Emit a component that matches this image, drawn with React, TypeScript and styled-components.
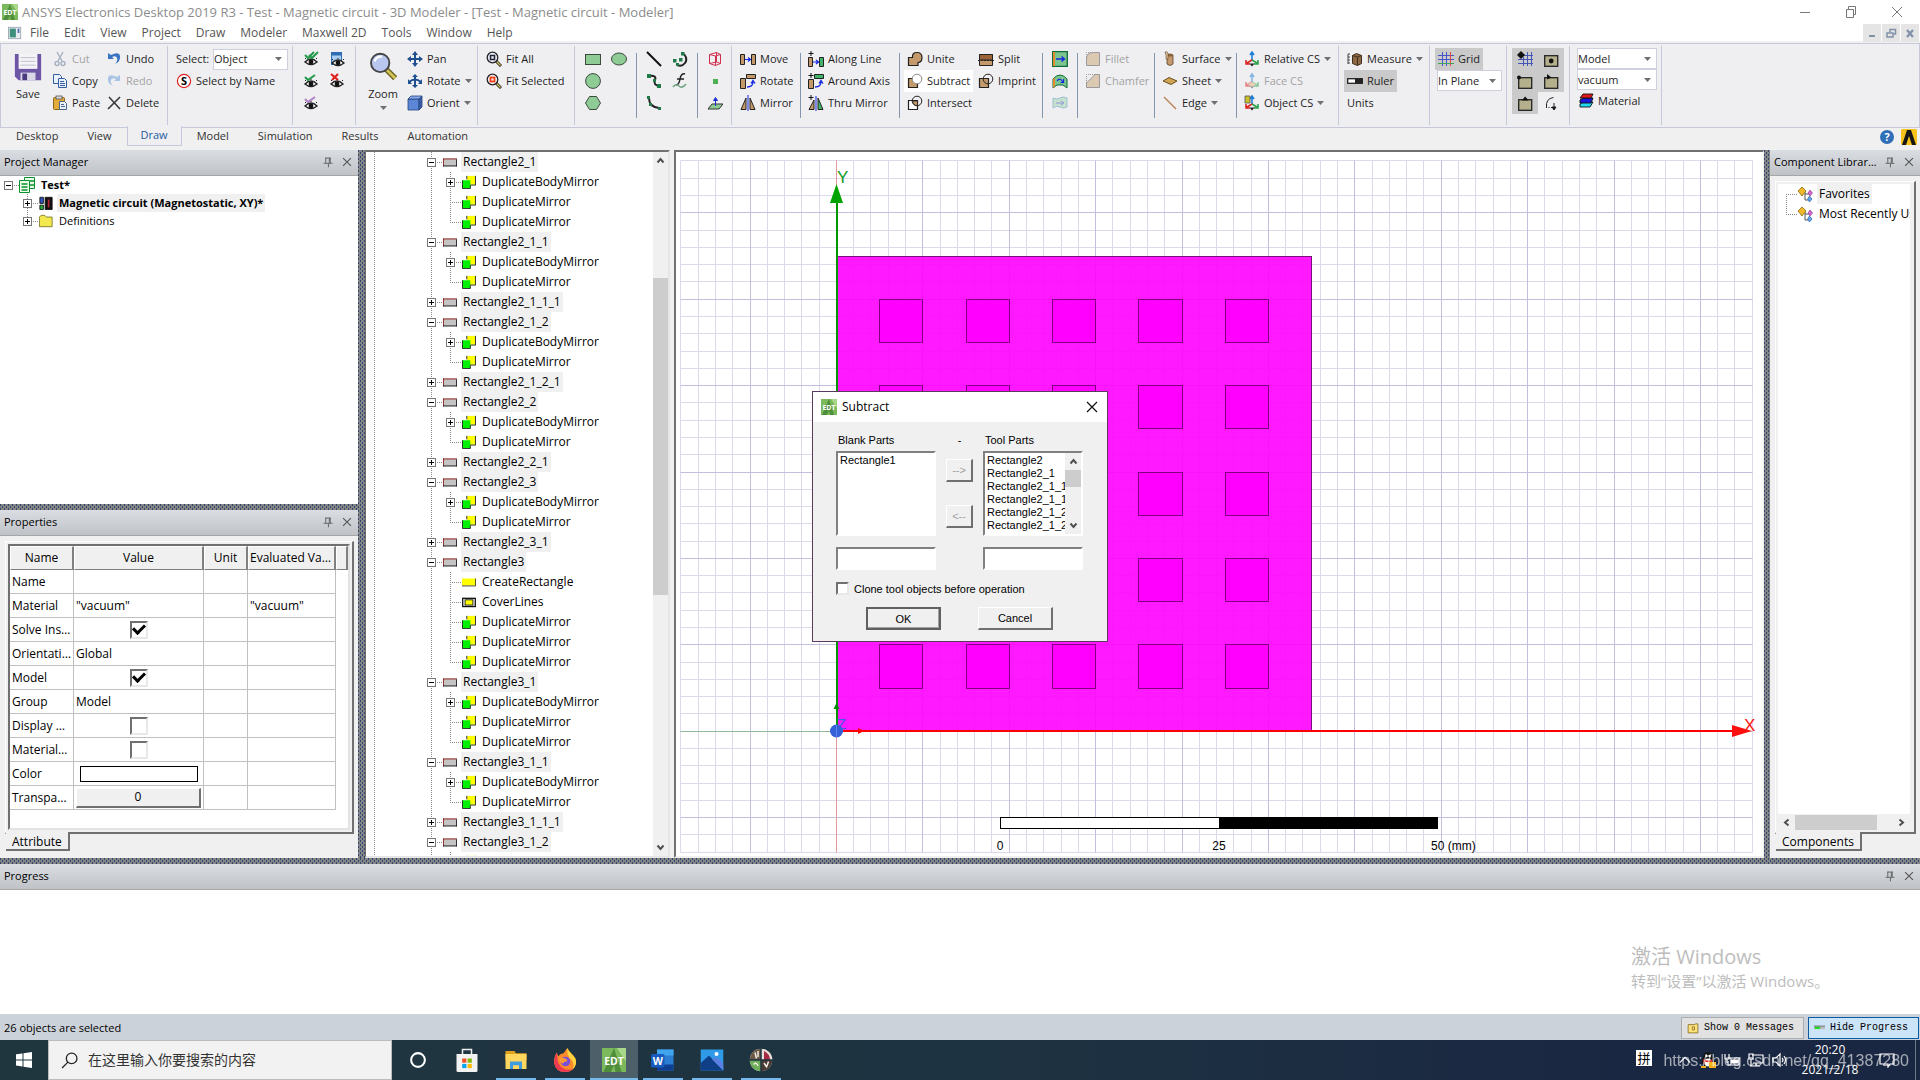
import React, { ReactNode } from 'react';
import styled, { createGlobalStyle, css } from 'styled-components';

const UI = '"Open Sans", "Noto Sans CJK SC", sans-serif';
const CLASSIC = '"Liberation Sans", "Noto Sans CJK SC", sans-serif';
const MONO = '"Liberation Mono", "Noto Sans CJK SC", monospace';

const Global = createGlobalStyle`
  * { box-sizing: border-box; }
  body { margin: 0; background: #f0f0f0; color: #000; font: 11px/18px ${UI}; overflow: hidden; }
  button, input, select { font: inherit; color: inherit; margin: 0; }
  button { background: none; border: 0; padding: 0; }
  svg { display: block; flex: none; }
  ul { list-style: none; margin: 0; padding: 0; }
`;

/* ------------------------------------------------------------------ icons */

const G = '#8fcb95';
const TAN = '#c49a6c';

const eye = (
  <g>
    <path d="M2 11q6-6 12 0q-6 5-12 0z" fill="#fff" stroke="#222" strokeWidth="1.4" />
    <circle cx="8" cy="11" r="2.4" fill="#111" />
    <path d="M3 8l-1-1M13 8l1-1M8 7V6" stroke="#222" />
  </g>
);
const csAxes = (
  <g fill="none" strokeWidth="1.6">
    <path d="M8 9V2M6 4l2-3 2 3" stroke="#1d7fd6" />
    <path d="M8 9l5 3M14 9v4h-4" stroke="#2ca24a" />
    <path d="M8 9l-5 3M2 9v4h4" stroke="#d9231d" />
    <path d="M5.500 12.500h5l-2.500 3z" fill="#222" stroke="none" />
  </g>
);
const snapBox = <rect x="1.700" y="4.700" width="13" height="10.600" fill="#b5b08c" stroke="#222" strokeWidth="1.300" />;

const icons: Record<string, ReactNode> = {
  edt: (
    <g>
      <rect width="16" height="16" fill="#7cb85c" />
      <path d="M8 0l5 16H9L8 11l-2 5H1z" fill="#4f8f3c" />
      <path d="M10 0h6v9z" fill="#a9d88a" />
      <text x="8" y="11" fontSize="7" fontWeight="700" textAnchor="middle" fill="#fff">EDT</text>
    </g>
  ),
  doc: (
    <g>
      <rect x=".5" y="1.500" width="14" height="13" fill="#e9edf2" stroke="#9aa4ae" />
      <rect x="2" y="3" width="7" height="10" fill="#3f8f7d" />
      <rect x="11" y="3" width="2" height="5" fill="#4a6ea9" />
    </g>
  ),
  save: (
    <g>
      <path d="M1 1h14v14H3l-2-2z" fill="#6d56a5" />
      <path d="M3 1h10v8H3z" fill="#f4f4f8" />
      <path d="M4 3h8M4 5h8M4 7h8" stroke="#c9c9d3" strokeWidth=".6" />
      <path d="M4 11h8v4H4z" fill="#d9d6e6" />
      <path d="M5 11.500h2.500V15H5z" fill="#4a3880" />
    </g>
  ),
  cut: (
    <g fill="none" stroke="#a9b4c2" strokeWidth="1.500">
      <path d="M5 1l5 9M11 1L6 10" />
      <circle cx="5" cy="12.500" r="2" />
      <circle cx="11" cy="12.500" r="2" />
    </g>
  ),
  copy: (
    <g fill="#e8f0fb" stroke="#355f9e">
      <path d="M1.500 1.500h6l2 2v7h-8z" />
      <path d="M6.500 5.500h6l2 2v7h-8z" />
      <path d="M8 8.500h4M8 10.500h5M8 12.500h5" />
    </g>
  ),
  paste: (
    <g>
      <rect x="1.500" y="2.500" width="11" height="12" rx="1" fill="#e3ab3a" stroke="#8a6417" />
      <rect x="4" y="1" width="6" height="3" fill="#d8d8d8" stroke="#555" strokeWidth=".8" />
      <path d="M7.500 6.500h5l2 2v6h-7z" fill="#eef3fb" stroke="#48648f" />
      <path d="M9 9.500h3M9 11.500h4" stroke="#48648f" />
    </g>
  ),
  undo: <path d="M2 2v6h6L6 6q4-2 5 1t-2 6q6-3 5-8T5 4z" fill="#3a74c4" />,
  redo: <path d="M14 2v6H8l2-2Q6 4 5 7t2 6Q1 10 2 5t9-1z" fill="#a9c3e4" />,
  del: <path d="M3 2l11 12M14 2L2 14" stroke="#3b3b3b" strokeWidth="1.600" />,
  byname: (
    <g>
      <circle cx="8" cy="8" r="6.600" fill="#fff" stroke="#e02020" strokeWidth="1.200" />
      <text x="8" y="12" fontSize="11" fontWeight="700" textAnchor="middle">S</text>
    </g>
  ),
  eyeAll: <g>{eye}<path d="M2 4l3 3 6-6M6 4l3 3 6-6" fill="none" stroke="#1f9b4a" strokeWidth="2" /></g>,
  eyeOne: <g>{eye}<path d="M2 4l3 3 7-5" fill="none" stroke="#1f9b4a" strokeWidth="2" /></g>,
  eyePart: <g>{eye}<path d="M2 4l3 3 7-5" fill="none" stroke="#b07fc4" strokeWidth="2" /></g>,
  eyeList: (
    <g>
      <rect x="2.500" y="1.500" width="10" height="12" fill="#a9cdf0" stroke="#2f6db3" />
      <path d="M2.500 3h10" stroke="#2f6db3" strokeWidth="3" />
      <g transform="translate(1 1)">{eye}</g>
    </g>
  ),
  eyeNone: <g>{eye}<path d="M2 1l7 6M9 1L3 7" stroke="#e02020" strokeWidth="2.200" /></g>,
  zoom: (
    <g>
      <path d="M9.500 9l5 5" stroke="#6b6320" strokeWidth="3" />
      <path d="M9.500 9l5 5" stroke="#d4c45a" strokeWidth="1.500" />
      <circle cx="6.500" cy="5.800" r="4.900" fill="#b9c6ee" stroke="#444" />
      <path d="M3.500 5q1-3 4-2.500" stroke="#fff" fill="none" strokeWidth="1.200" />
    </g>
  ),
  pan: (
    <g fill="#1e4f8f">
      <path d="M7 3h2v10H7z" />
      <path d="M3 7h10v2H3z" />
      <path d="M8 0l3 4H5zM8 16l3-4H5zM0 8l4-3v6zM16 8l-4-3v6z" />
    </g>
  ),
  rotate: (
    <g fill="none" stroke="#1e4f8f" strokeWidth="2">
      <path d="M8 2v12M2 9q6-5 12 0" />
      <path d="M5 4l3-3 3 3zM5 12l3 3 3-3zM1 6v5h4zM15 6v5h-4z" fill="#1e4f8f" stroke="none" />
    </g>
  ),
  orient: (
    <g stroke="#27457e" strokeWidth=".8">
      <path d="M1 4h11v11H1z" fill="#5c86d6" />
      <path d="M1 4l3-3h11l-3 3z" fill="#88aaea" />
      <path d="M12 4l3-3v11l-3 3z" fill="#3a5fa8" />
    </g>
  ),
  fitAll: (
    <g fill="none">
      <path d="M10 10l5 5" stroke="#222" strokeWidth="3" />
      <path d="M10.500 10.500l4 4" stroke="#d4c45a" strokeWidth="1.200" />
      <circle cx="6.500" cy="6.500" r="5.300" fill="#e9ecf8" stroke="#222" strokeWidth="1.300" />
      <rect x="4.500" y="4.500" width="4" height="4" stroke="#223" strokeWidth="1.500" />
    </g>
  ),
  fitSel: (
    <g fill="none">
      <path d="M10 10l5 5" stroke="#222" strokeWidth="3" />
      <path d="M10.500 10.500l4 4" stroke="#d4c45a" strokeWidth="1.200" />
      <circle cx="6.500" cy="6.500" r="5.300" fill="#f6e9ec" stroke="#222" strokeWidth="1.300" />
      <rect x="4.500" y="4.500" width="4" height="4" stroke="#f03a10" strokeWidth="1.700" />
    </g>
  ),
  rect: <rect x=".5" y="3.500" width="15" height="10" fill={G} stroke="#3c4a3e" />,
  ellipse: <ellipse cx="8" cy="8" rx="7.500" ry="6" fill={G} stroke="#3c4a3e" />,
  circle: <circle cx="8" cy="8" r="7.400" fill={G} stroke="#3c4a3e" />,
  hexagon: <path d="M4.500 1.500h7l4 6.500-4 6.500h-7L.5 8z" fill={G} stroke="#3c4a3e" />,
  line: <path d="M1 1l14 14" stroke="#111" strokeWidth="2" />,
  arc: (
    <g fill="none">
      <path d="M12 3q4 5 1 9t-8 2" stroke="#222" strokeWidth="2" />
      <path d="M9 1h3.500v3.500H9zM1 8h3.500v3.500H1zM7 7h3.500v3.500H7zM4 12h3v3H4z" fill="#1f7a4a" />
    </g>
  ),
  spline: (
    <g fill="none">
      <path d="M3 3q8-1 6 4t4 6" stroke="#222" strokeWidth="2" />
      <path d="M1 1h4v4H1zM7 6h3v3H7zM11 11h4v4h-4z" fill="#1f7a4a" />
    </g>
  ),
  func: (
    <g fill="none" strokeWidth="1.500">
      <path d="M13 1q-4-1-5 5t-4 6M5 6h7" stroke="#222" />
      <path d="M1 14q3-4 6-1t7-2" stroke="#6fa581" />
    </g>
  ),
  arc3: (
    <g fill="none">
      <path d="M3 3q0 9 10 10" stroke="#222" strokeWidth="2" />
      <path d="M1 1h3v3H1zM3 8h3v3H3zM12 12h3v3h-3z" fill="#1f7a4a" />
    </g>
  ),
  cube: (
    <g fill="none" stroke="#cf2f4a">
      <path d="M2.500 3.500l7-2 4 2v9l-5 2-6-2zM2.500 3.500l6 1.500v9.500M8.500 5l5-1.500M9.500 1.500V11l4 1.500M9.500 11l-7 1.500" />
    </g>
  ),
  point: <rect x="6" y="6" width="5" height="5" fill="#4caf50" />,
  plane: (
    <g>
      <path d="M1 14l4-5h11l-4 5z" fill={G} stroke="#333" />
      <path d="M8.500 11V4M6.500 5.500l2-3 2 3z" stroke="#2030d0" fill="#2030d0" />
    </g>
  ),
  move: (
    <g>
      <path d="M.5 3.500h4v10h-4zM11.500 3.500h4v10h-4z" fill={TAN} stroke="#222" />
      <path d="M5 8.500h5M8 6.500l2.500 2L8 10.500" stroke="#1424e0" fill="none" strokeWidth="1.200" />
    </g>
  ),
  rot: (
    <g>
      <path d="M.5 5.500h5v10h-5zM6.500 1.500h9v4h-9z" fill={TAN} stroke="#222" />
      <path d="M7 14q6 0 6-5M11 10.500l2-3 2 3" stroke="#1424e0" fill="none" strokeWidth="1.300" />
    </g>
  ),
  mirror: (
    <g stroke="#222">
      <path d="M6 3v11.500H1z" fill={TAN} />
      <path d="M10 3v11.500h5z" fill={TAN} />
      <path d="M8 0v16" stroke="#1424e0" />
    </g>
  ),
  along: (
    <g>
      <path d="M.5 6.500h4v9h-4z" fill={TAN} stroke="#222" />
      <path d="M11.500 6.500h4v9h-4z" fill="#3fb56b" stroke="#222" />
      <path d="M5 11h5M8 9l2.500 2L8 13" stroke="#1424e0" fill="none" strokeWidth="1.200" />
      <path d="M3 0v5M.5 2.500h5" stroke="#111" />
    </g>
  ),
  around: (
    <g>
      <path d="M.5 6.500h5v9h-5z" fill={TAN} stroke="#222" />
      <path d="M6.500 1.500h9v4h-9z" fill="#3fb56b" stroke="#222" />
      <path d="M7 14q6 0 6-5M11 10.500l2-3 2 3" stroke="#1424e0" fill="none" strokeWidth="1.300" />
      <path d="M3 0v5M.5 2.500h5" stroke="#111" />
    </g>
  ),
  thru: (
    <g stroke="#222">
      <path d="M6 5v9.500H1z" fill={TAN} />
      <path d="M10 3v11.500h5z" fill="#3fb56b" />
      <path d="M8 1v15" stroke="#1424e0" />
      <path d="M3 0v5M.5 2.500h5" stroke="#111" />
    </g>
  ),
  unite: <path d="M1.500 6.500h4Q5 1.500 10 1.500t5 5-4 5v3H1.500z" fill={TAN} stroke="#222" strokeWidth="1.200" />,
  subtract: (
    <g>
      <path d="M1.500 5.500h9v9h-9z" fill={TAN} stroke="#222" strokeWidth="1.200" />
      <circle cx="10" cy="6" r="4.800" fill="#fff" stroke="#888" />
    </g>
  ),
  intersect: (
    <g>
      <path d="M1.500 5.500h9v9h-9z" fill="#fff" stroke="#222" strokeWidth="1.200" />
      <circle cx="10" cy="6" r="4.800" fill="none" stroke="#222" />
      <path d="M5.500 6h5v4.500Q6 10.500 5.500 6z" fill={TAN} stroke="#222" strokeWidth=".8" />
    </g>
  ),
  split: (
    <g>
      <path d="M1.500 3.500h13v11h-13z" fill={TAN} stroke="#222" />
      <path d="M1.500 3.500h13V9h-13z" fill="#9a6338" stroke="#222" />
      <path d="M0 9.500h16" stroke="#222" strokeDasharray="2 1" />
    </g>
  ),
  imprint: (
    <g>
      <path d="M1.500 5.500h9v9h-9z" fill={TAN} stroke="#222" strokeWidth="1.200" />
      <circle cx="10" cy="6" r="4.800" fill="none" stroke="#222" />
    </g>
  ),
  sweepV: (
    <g>
      <path d="M.7.7h14.600v14.600H.7z" fill="#7cc58f" stroke="#0d6b38" strokeWidth="1.300" />
      <path d="M1 1h2v14H1z" fill="#e08b2e" />
      <path d="M4 8h8M9.500 5.500L12.500 8l-3 2.500" stroke="#1424e0" fill="none" strokeWidth="1.300" />
    </g>
  ),
  sweepA: (
    <g>
      <path d="M1 15V6q7-8 14 0v9l-4-3H5z" fill="#7cc58f" stroke="#0d6b38" />
      <path d="M1 6l2-1v8l-2 2z" fill="#e08b2e" />
      <path d="M5 8q3-4 6 1M11.500 6v3.500H8.500" stroke="#1424e0" fill="none" strokeWidth="1.200" />
    </g>
  ),
  sweepP: (
    <g opacity=".55">
      <path d="M1 3q4 2 7 0t7 0v9q-4 2-7 0t-7 1z" fill="#a7d6b4" stroke="#5a9bb4" />
      <path d="M4 8h7M9 6l3 2-3 2" stroke="#4a56d0" fill="none" />
    </g>
  ),
  fillet: (
    <g stroke="#9a9a9a" fill="none">
      <path d="M1.500 14.500V8q0-6.500 7-6.500h6v13z" fill="#dcc9b1" />
      <path d="M1.500 8V1.500h7" strokeDasharray="1 1" />
    </g>
  ),
  chamfer: (
    <g stroke="#9a9a9a" fill="none">
      <path d="M1.500 14.500V10L10 1.500h4.500v13z" fill="#dcc9b1" />
      <path d="M1.500 10V1.500H10" strokeDasharray="1 1" />
    </g>
  ),
  surface: (
    <g>
      <path d="M5 4v9q3 3 6 0V4z" fill={TAN} stroke="#5c4326" strokeWidth=".8" />
      <ellipse cx="8" cy="4" rx="3" ry="1.500" fill="#8a6238" />
      <path d="M3 1q2-1 3 1v6H4V4z" fill="#e3c39a" stroke="#5c4326" strokeWidth=".6" />
    </g>
  ),
  sheet: <path d="M1 8l6-3.500L15 8l-6 3.500z" fill="#cda553" stroke="#6a4f1c" />,
  edge: <path d="M2 2l12 12" stroke="#b98458" strokeWidth="1.400" />,
  relcs: csAxes,
  facecs: <g opacity=".5">{csAxes}<path d="M4 11l4-2 4 2-4 3z" fill="#e3b07f" /></g>,
  objcs: <g>{csAxes}<path d="M1 1h5v7H1z" fill="#c9c02c" stroke="#555" strokeWidth=".8" /></g>,
  measure: (
    <g>
      <path d="M1 3v10M1 3h2M1 6h2M1 9h2M1 12h2" stroke="#444" />
      <path d="M5.500 4.500l4-2 5 2v8l-4 2-5-2z" fill="#8d6743" stroke="#42301e" />
      <path d="M5.500 4.500l5 1.500v8.500M10.500 6l4-1.500" stroke="#42301e" fill="none" />
    </g>
  ),
  ruler: (
    <g>
      <rect x=".7" y="5.700" width="14.600" height="4.600" fill="#fff" stroke="#222" strokeWidth="1.300" />
      <rect x="8" y="5.500" width="7.500" height="5" fill="#222" />
    </g>
  ),
  grid: (
    <g fill="none">
      <path d="M4.500 1v14M8.500 1v14M0 4.500h16M0 8.500h16" stroke="#4456c8" />
      <path d="M12.500 1v14" stroke="#e04848" />
      <path d="M0 12.500h16" stroke="#3fa455" />
    </g>
  ),
  snapGrid: (
    <g>
      <path d="M6.500 6v9M10.500 1v14M14.500 1v14M6 4.500h10M1 8.500h15M1 12.500h15" stroke="#4456b8" />
      <path d="M4 0l4 4-4 4-4-4z" fill="#111" />
    </g>
  ),
  snapCenter: <g>{snapBox}<circle cx="8.200" cy="10" r="2.400" fill="#111" /></g>,
  snapVertex: <g>{snapBox}<circle cx="2" cy="4.500" r="2" fill="#111" /></g>,
  snapEdge: <g>{snapBox}<path d="M4 1l4.500 3.500-4.500 2z" fill="#111" /></g>,
  snapMid: <g>{snapBox}<path d="M4.700 5.500l3.500-4 3.500 4z" fill="#111" /></g>,
  snapArc: (
    <g fill="none" stroke="#222">
      <path d="M3.500 12.500q-1-9 7-10" />
      <path d="M3 12.500h6" strokeDasharray="1 1.500" />
      <path d="M11 8v4M9 12h4l-2 3z" fill="#111" />
    </g>
  ),
  material: (
    <g stroke="#111" strokeWidth=".9">
      <path d="M2 11l3-2h10l-3 5H2z" fill="#20d8f0" />
      <path d="M2 7l3-2h10l-2 5H2z" fill="#1818d8" />
      <path d="M2 5l3-4h10l-2 4z" fill="#e01818" />
    </g>
  ),
  help: (
    <g>
      <circle cx="8" cy="8" r="7" fill="#2f6fb8" />
      <text x="8" y="12" fontSize="11" fontWeight="700" textAnchor="middle" fill="#fff">?</text>
    </g>
  ),
  ansys: (
    <g>
      <rect width="16" height="16" rx="1.500" fill="#f7c21a" />
      <path d="M6 1h4l5 15h-4L8 7l-3 9H1z" fill="#171717" />
    </g>
  ),
  pin: <path d="M5.500 3v6M10.500 3v6M5 3.500h6M9.500 4v5M3 9.500h10M8.500 10v4" stroke="#555" fill="none" />,
  x: <path d="M3.500 3.500l9 9M12.500 3.500l-9 9" stroke="#555" strokeWidth="1.300" />,
  project: (
    <g fill="#e9ffe9" stroke="#0a8f2f">
      <path d="M5.500.5h10v11h-10z" />
      <path d="M.5 3.500h10v12H.5z" />
      <path d="M2.500 7h6M2.500 10h6M2.500 13h6M12 3v2M14 3v2M12 7v2M14 7v2" strokeWidth="1.500" />
    </g>
  ),
  design: (
    <g stroke="#111">
      <path d="M1 1.500h4v7H1z" fill="#2f55c8" />
      <path d="M1 10.500h4v5H1z" fill="#1fae3a" />
      <path d="M7 1.500h8v14H7z" fill="#111" />
      <path d="M9.500 3.500h3v10h-3z" fill="#b3273a" />
    </g>
  ),
  folder: <path d="M.5 14.500v-11l2-2h4l2 2h6.500v11z" fill="#f3e84e" stroke="#7a7426" />,
  sheetObj: (
    <g>
      <rect x="0" y="4" width="16" height="9" fill="#c4c4c4" />
      <path d="M0 4.500h16M.5 4v9" stroke="#8c1414" />
      <path d="M0 12.500h16M15.500 5v8" stroke="#111" />
    </g>
  ),
  dup: (
    <g>
      <path d="M6 1h9v10H6z" fill="#ffff00" />
      <path d="M5.500 1v4M15.500 1v10.500H9" stroke="#111" fill="none" />
      <path d="M.5 6h9v9H.5z" fill="#00f000" />
      <path d="M.5 6v9.500h9V12" stroke="#111" fill="none" />
    </g>
  ),
  create: (
    <g>
      <rect x="0" y="4" width="16" height="8" fill="#ffff00" />
      <path d="M0 12.500h15.500V4" stroke="#333" fill="none" />
    </g>
  ),
  cover: (
    <g>
      <rect x=".8" y="3.800" width="14.400" height="9.400" fill="#fff" stroke="#111" strokeWidth="1.500" />
      <rect x="3.500" y="5.500" width="9" height="6" fill="#ffff00" stroke="#111" />
    </g>
  ),
  lib: (
    <g>
      <path d="M8 5v9h3M8 8h5" stroke="#555" fill="none" />
      <path d="M5 1l4 4-4 5-4-5z" fill="#f0b92a" stroke="#8c6a12" strokeWidth=".8" />
      <path d="M13 4l2.500 3L13 10l-2-3z" fill="#d86ad8" stroke="#7a2f7a" strokeWidth=".6" />
      <path d="M12.500 10l2.500 3-2.500 3-2-3z" fill="#5fa8f0" stroke="#1d4f96" strokeWidth=".6" />
    </g>
  ),
  msg: (
    <g>
      <path d="M1.500 3.500h8l2-1h3v12h-13z" fill="#ffe27a" stroke="#77611a" />
      <path d="M7 6.500h3v4H7z" fill="none" stroke="#77611a" />
    </g>
  ),
  bar: (
    <g>
      <path d="M0 5h16v4H0z" fill="#bcbcbc" />
      <path d="M1 5.500h8v3H1z" fill="#14e014" />
      <path d="M0 4.500h16" stroke="#444" />
    </g>
  ),
  winMin: <path d="M3 8.500h10" stroke="#777" />,
  winMax: <path d="M3.500 5.500h7v8h-7zM5.500 5V2.500h7v8H11" fill="none" stroke="#777" />,
  winX: <path d="M3 3l10 10M13 3L3 13" stroke="#777" />,
  mdiMin: <path d="M5 11h6" stroke="#8091a8" strokeWidth="2" />,
  mdiMax: <path d="M4 8h6v4H4zM7 7V4.500h5.500V9H11" fill="none" stroke="#8091a8" strokeWidth="1.500" />,
  mdiX: <path d="M5 5l6 7M11 5l-6 7" stroke="#8091a8" strokeWidth="2.200" />,
  start: <path d="M0 2.300L6.500 1.400v6H0zM7.500 1.200L16 0v7.400H7.500zM0 8.500h6.500v6L0 13.600zM7.500 8.500H16V16l-8.500-1.200z" fill="#fff" />,
  search: (
    <g fill="none" stroke="#222" strokeWidth="1.200">
      <circle cx="10" cy="6" r="5" />
      <path d="M6.500 9.500L1 15" />
    </g>
  ),
  cortana: <circle cx="8" cy="8" r="5" fill="none" stroke="#fff" strokeWidth="1.500" />,
  store: (
    <g>
      <path d="M5 5V1h6v4" fill="none" stroke="#eee" />
      <path d="M1 4h14v11q0 1-1 1H2q-1 0-1-1z" fill="#f2f2f2" />
      <path d="M4.800 7h2.800v2.800H4.800z" fill="#f25022" />
      <path d="M8.400 7h2.800v2.800H8.400z" fill="#7fba00" />
      <path d="M4.800 10.600h2.800v2.800H4.800z" fill="#00a4ef" />
      <path d="M8.400 10.600h2.800v2.800H8.400z" fill="#ffb900" />
    </g>
  ),
  explorer: (
    <g>
      <path d="M1 2h6l1 1.500h7V8H1z" fill="#e0a21c" />
      <path d="M1 4h14v10H1z" fill="#ffd75e" />
      <path d="M4 9h8v5h-2v-2.500H6V14H4z" fill="#3f9be0" />
    </g>
  ),
  firefox: (
    <g>
      <path d="M9.500 0q1 2 3 4 3.500 3 2.800 6.500Q14 16 8 16T.7 10Q.5 6 2.500 3l1 2.500Q5 3.500 7 3.500 8.500 1.500 9.500 0z" fill="#ff8a2a" />
      <path d="M9.500 0q1 2 3 4 3.500 3 2.800 6.500-.5 2-2 3.500 1-4-1-6Q9 5 9.500 0z" fill="#ffd23f" />
      <path d="M2.500 3q-2 4-1.700 7Q2 16 8 16q3.500 0 5.300-2Q9 15.500 6 13T3 7z" fill="#ec3a55" />
      <circle cx="8.300" cy="9" r="3.200" fill="#7a4fd8" />
      <path d="M4 7q2-1 4 0 2 .5 1 2-2 0-2.500 1.500Q4.500 9.500 4 7z" fill="#ff9a33" />
    </g>
  ),
  word: (
    <g>
      <path d="M4 1h11v14H4z" fill="#2b7cd3" />
      <path d="M4 1h11v4H4z" fill="#41a5ee" />
      <path d="M4 11h11v4H4z" fill="#103f91" />
      <rect x="0" y="4" width="9" height="9" rx="1" fill="#185abd" />
      <text x="4.500" y="11" fontSize="7" fontWeight="700" textAnchor="middle" fill="#fff">W</text>
    </g>
  ),
  photos: (
    <g>
      <rect x=".5" y="1" width="15" height="14" fill="#2f9be8" />
      <path d="M.5 10L6 5l9.500 10H.5z" fill="#0f3f86" />
      <path d="M8 7.500L11 6l4.500 4v5z" fill="#5b7fe0" />
      <circle cx="11" cy="4" r="1.300" fill="#fff" />
    </g>
  ),
  avatar: (
    <g>
      <circle cx="8" cy="8" r="7.500" fill="#e9e2d6" />
      <path d="M8 .5A7.500 7.500 0 0 0 .5 8H8z" fill="#6b5a48" />
      <path d="M8 .5A7.500 7.500 0 0 1 15.500 8H8z" fill="#e7dfd8" />
      <path d="M10 2q4 2 4 6h-4z" fill="#a52a45" />
      <path d="M8 15.500A7.500 7.500 0 0 1 .5 8H8z" fill="#6fae5a" />
      <path d="M8 15.500A7.500 7.500 0 0 0 15.500 8H8z" fill="#4a3a34" />
      <path d="M4 3l1 4M6 2v4M3 11q2-2 3 1M10 10l2 3M13 9l-1 3" stroke="#f2ece2" fill="none" />
      <path d="M0 8h16M8 0v16" stroke="#1e3442" />
    </g>
  ),
  ime: (
    <g>
      <rect width="16" height="16" fill="#fff" />
      <text x="8" y="13" fontSize="13" textAnchor="middle" fill="#000">拼</text>
    </g>
  ),
  up: <path d="M2 11l6-6 6 6" stroke="#fff" fill="none" strokeWidth="1.300" />,
  qq: (
    <g>
      <path d="M8 0q5 0 5 6l2 5-2 1-2 3H5l-2-3-2-1 2-5q0-6 5-6z" fill="#151515" />
      <ellipse cx="8" cy="10.500" rx="3.500" ry="4" fill="#fff" />
      <path d="M3 7q5 3 10 0l-1 2.500Q8 11 5 9.500L4 13z" fill="#e02a20" />
      <path d="M1 14h5v2H1zM9 10h7v6H9z" fill="#f5b21a" />
      <circle cx="6.500" cy="4" r="1.200" fill="#fff" />
      <circle cx="9.500" cy="4" r="1.200" fill="#fff" />
    </g>
  ),
  battery: (
    <g fill="none" stroke="#fff" strokeWidth="1.200">
      <path d="M5 6h10v7H4V9" />
      <path d="M7 8h7v3H7z" fill="#fff" />
      <path d="M1 2v5h4V2M3 7v4" />
    </g>
  ),
  net: (
    <g fill="none" stroke="#fff" strokeWidth="1.200">
      <path d="M4 3h11v8H5M2 14h10M8 11v3" />
      <path d="M1 2h4v5H1zM3 7v7" />
    </g>
  ),
  sound: (
    <g fill="none" stroke="#fff" strokeWidth="1.200">
      <path d="M1 6h3l4-4v12L4 10H1zM10 6q2 2 0 4M12 4q3 4 0 8" />
    </g>
  ),
  note: <path d="M1 2h14v10h-4l-2 3v-3H1z" fill="none" stroke="#fff" strokeWidth="1.200" />,
};

const Icon = ({ n, w = 16, h = w }: { n: string; w?: number; h?: number }) => (
  <svg width={w} height={h} viewBox="0 0 16 16" aria-hidden="true">{icons[n]}</svg>
);

const Caret = ({ dim }: { dim?: boolean }) => (
  <svg width="7" height="4" viewBox="0 0 7 4" aria-hidden="true">
    <path d="M0 0h7L3.500 4z" fill={dim ? '#b0b0b0' : '#707070'} />
  </svg>
);

const Chevron = ({ d }: { d: 'up' | 'down' | 'left' | 'right' }) => {
  const paths = {
    up: 'M1.500 6.500L4.500 3l3 3.500',
    down: 'M1.500 2.500L4.500 6l3-3.500',
    left: 'M6.500 1.500L3 4.500l3.500 3',
    right: 'M2.500 1.500L6 4.500l-3.500 3',
  };
  return (
    <svg width="9" height="9" viewBox="0 0 9 9" aria-hidden="true">
      <path d={paths[d]} fill="none" stroke="#505050" strokeWidth="2" />
    </svg>
  );
};

/* ----------------------------------------------------------- window frame */

const Page = styled.div`
  display: flex;
  flex-direction: column;
  height: 100vh;
`;

const TitleBar = styled.header`
  display: flex;
  align-items: center;
  gap: 4px;
  height: 23px;
  padding: 0 2px;
  background: #fff;
  color: #8c8c8c;
  font-size: 13px;
`;

const Spacer = styled.div`
  flex: 1;
`;

const CaptionButton = styled.button`
  display: grid;
  place-items: center;
  width: 42px;
  height: 20px;
`;

const MenuBar = styled.nav`
  display: flex;
  align-items: center;
  height: 20px;
  padding-left: 8px;
  gap: 15px;
  background: linear-gradient(#fff 18px, #f0f0f0 18px);
  color: #555;
  font-size: 12px;

  > svg { margin-right: -7px; }
`;

const MenuItem = styled.button`
  line-height: 18px;
`;

const MdiButtons = styled.div`
  display: flex;
  gap: 1px;
  height: 18px;
  padding-right: 1px;
`;

const MdiButton = styled.button`
  display: grid;
  place-items: center;
  width: 18px;
  background: #e5e5e5;
`;

/* ---------------------------------------------------------------- ribbon */

const RibbonBar = styled.section`
  display: flex;
  height: 85px;
  padding: 2px 0;
  border: 1px solid #c6c8dc;
  background: #efeff2;
  color: #1e1e1e;
`;

const Group = styled.div<{ $w?: number; $flush?: boolean }>`
  display: flex;
  padding: 2px 0 0 ${p => (p.$flush ? 0 : 5)}px;
  width: ${p => (p.$w ? `${p.$w}px` : 'auto')};
  border-right: 1px solid #c6c8dc;
`;

const Separator = styled.div`
  width: 1px;
  height: 65px;
  margin: 5px 4px 0;
  background: #8496ad;
`;

const Column = styled.div<{ $w: number }>`
  display: flex;
  flex-direction: column;
  align-items: flex-start;
  width: ${p => p.$w}px;
`;

const Tool = styled.button<{ $tone?: string; $off?: boolean }>`
  display: flex;
  align-items: center;
  height: 22px;
  padding: 0 3px;
  gap: 4px;
  background: ${p => p.$tone || 'transparent'};
  color: ${p => (p.$off ? '#a3a3a3' : 'inherit')};
  white-space: nowrap;
`;

const BigTool = styled.button`
  display: flex;
  flex-direction: column;
  align-items: center;
  width: 48px;
  padding: 4px 0 0 6px;
  line-height: 24px;
`;

const IconGrid = styled.div<{ $cols: number }>`
  display: grid;
  grid-template-columns: repeat(${p => p.$cols}, 26px);
  grid-auto-rows: 22px;
`;

const IconTool = styled.button<{ $on?: boolean; $col?: number }>`
  display: grid;
  place-items: center;
  grid-column: ${p => p.$col || 'auto'};
  background: ${p => (p.$on ? '#cacaca' : 'transparent')};
`;

const Row = styled.div`
  display: flex;
  align-items: center;
  height: 22px;
  padding-left: 3px;
`;

const RowLabel = styled.label`
  width: 37px;
`;

const ComboBox = styled.span<{ $w: number }>`
  display: grid;
  grid-template-columns: 1fr 12px;
  align-items: center;
  width: ${p => p.$w}px;
  height: 21px;
  border: 1px solid #cfd0de;
  background: #fff;

  select {
    grid-area: 1 / 1 / 2 / 3;
    width: 100%;
    padding: 0;
    border: 0;
    background: none;
    appearance: none;
  }
  svg { grid-area: 1 / 2; pointer-events: none; }
`;

const Offset = styled.div`
  padding-left: 2px;
`;

const Combo = ({ id, w, value, label }: { id: string; w: number; value: string; label?: string }) => (
  <ComboBox $w={w}>
    <select id={id} aria-label={label} defaultValue={value}>
      <option>{value}</option>
    </select>
    <Caret />
  </ComboBox>
);

type ToolDef = { i?: string; t: string; caret?: boolean; off?: boolean; tone?: string };

const ToolColumn = ({ w, items }: { w: number; items: ToolDef[] }) => (
  <Column $w={w}>
    {items.map(({ i, t, caret, off, tone }) => (
      <Tool key={t} $off={off} $tone={tone} disabled={off}>
        {i && <Icon n={i} />}
        {t}
        {caret && <Caret dim={off} />}
      </Tool>
    ))}
  </Column>
);

const TabStrip = styled.nav`
  display: flex;
  align-items: flex-start;
  gap: 1px;
  height: 22px;
  padding: 0 3px 0 2px;
  color: #333;
`;

const RibbonTab = styled.button<{ $on?: boolean }>`
  height: ${p => (p.$on ? 20 : 15)}px;
  padding: ${p => (p.$on ? '1px 13px 3px' : '0 14px')};
  line-height: 15px;
  ${p =>
    p.$on &&
    css`
      margin-top: -2px;
      border: 1px solid #c6c8dc;
      border-top: 0;
      background: #efeff2;
      color: #1d5a9c;
    `}
`;

const TabIcons = styled.div`
  display: flex;
  gap: 6px;
  padding-top: 1px;
`;

const tabs = ['Desktop', 'View', 'Draw', 'Model', 'Simulation', 'Results', 'Automation'];

const Ribbon = () => (
  <>
    <RibbonBar>
      <Group $flush>
        <BigTool><Icon n="save" w={30} />Save</BigTool>
        <ToolColumn w={54} items={[{ i: 'cut', t: 'Cut', off: true }, { i: 'copy', t: 'Copy' }, { i: 'paste', t: 'Paste' }]} />
        <ToolColumn w={64} items={[{ i: 'undo', t: 'Undo' }, { i: 'redo', t: 'Redo', off: true }, { i: 'del', t: 'Delete' }]} />
      </Group>
      <Group>
        <Column $w={119}>
          <Row>
            <RowLabel htmlFor="select-mode">Select:</RowLabel>
            <Combo id="select-mode" w={75} value="Object" />
          </Row>
          <Tool><Icon n="byname" />Select by Name</Tool>
        </Column>
      </Group>
      <Group $w={63}>
        <IconGrid $cols={2}>
          <IconTool aria-label="Show all"><Icon n="eyeAll" /></IconTool>
          <IconTool aria-label="Visibility list"><Icon n="eyeList" /></IconTool>
          <IconTool aria-label="Show selected"><Icon n="eyeOne" /></IconTool>
          <IconTool aria-label="Hide selected"><Icon n="eyeNone" /></IconTool>
          <IconTool aria-label="Show active"><Icon n="eyePart" /></IconTool>
        </IconGrid>
      </Group>
      <Group $flush>
        <BigTool><Icon n="zoom" w={30} />Zoom<Caret /></BigTool>
        <ToolColumn w={73} items={[{ i: 'pan', t: 'Pan' }, { i: 'rotate', t: 'Rotate', caret: true }, { i: 'orient', t: 'Orient', caret: true }]} />
      </Group>
      <Group>
        <ToolColumn w={91} items={[{ i: 'fitAll', t: 'Fit All' }, { i: 'fitSel', t: 'Fit Selected' }]} />
      </Group>
      <Group $w={157}>
        <IconGrid $cols={2}>
          <IconTool aria-label="Rectangle"><Icon n="rect" /></IconTool>
          <IconTool aria-label="Ellipse"><Icon n="ellipse" /></IconTool>
          <IconTool $col={1} aria-label="Circle"><Icon n="circle" /></IconTool>
          <IconTool $col={1} aria-label="Polygon"><Icon n="hexagon" /></IconTool>
        </IconGrid>
        <Separator />
        <IconGrid $cols={2}>
          <IconTool aria-label="Line"><Icon n="line" /></IconTool>
          <IconTool aria-label="Center arc"><Icon n="arc" /></IconTool>
          <IconTool aria-label="Spline"><Icon n="spline" /></IconTool>
          <IconTool aria-label="Equation curve"><Icon n="func" /></IconTool>
          <IconTool aria-label="Three point arc"><Icon n="arc3" /></IconTool>
        </IconGrid>
        <Separator />
        <IconGrid $cols={1}>
          <IconTool aria-label="Box"><Icon n="cube" /></IconTool>
          <IconTool aria-label="Point"><Icon n="point" /></IconTool>
          <IconTool aria-label="Plane"><Icon n="plane" /></IconTool>
        </IconGrid>
      </Group>
      <Group>
        <ToolColumn w={59} items={[{ i: 'move', t: 'Move' }, { i: 'rot', t: 'Rotate' }, { i: 'mirror', t: 'Mirror' }]} />
        <Separator />
        <ToolColumn w={90} items={[{ i: 'along', t: 'Along Line' }, { i: 'around', t: 'Around Axis' }, { i: 'thru', t: 'Thru Mirror' }]} />
        <Separator />
        <ToolColumn w={71} items={[{ i: 'unite', t: 'Unite' }, { i: 'subtract', t: 'Subtract', tone: '#fff' }, { i: 'intersect', t: 'Intersect' }]} />
        <ToolColumn w={63} items={[{ i: 'split', t: 'Split' }, { i: 'imprint', t: 'Imprint' }]} />
        <Separator />
        <IconGrid $cols={1}>
          <IconTool aria-label="Sweep along vector"><Icon n="sweepV" /></IconTool>
          <IconTool aria-label="Sweep around axis"><Icon n="sweepA" /></IconTool>
          <IconTool aria-label="Sweep along path"><Icon n="sweepP" /></IconTool>
        </IconGrid>
        <Separator />
        <ToolColumn w={68} items={[{ i: 'fillet', t: 'Fillet', off: true }, { i: 'chamfer', t: 'Chamfer', off: true }]} />
        <Separator />
        <ToolColumn w={73} items={[{ i: 'surface', t: 'Surface', caret: true }, { i: 'sheet', t: 'Sheet', caret: true }, { i: 'edge', t: 'Edge', caret: true }]} />
        <Separator />
        <ToolColumn w={97} items={[{ i: 'relcs', t: 'Relative CS', caret: true }, { i: 'facecs', t: 'Face CS', off: true }, { i: 'objcs', t: 'Object CS', caret: true }]} />
      </Group>
      <Group>
        <ToolColumn w={85} items={[{ i: 'measure', t: 'Measure', caret: true }, { i: 'ruler', t: 'Ruler', tone: '#cacaca' }, { t: 'Units' }]} />
      </Group>
      <Group>
        <Column $w={71}>
          <Tool $tone="#cacaca"><Icon n="grid" />Grid</Tool>
          <Offset><Combo id="grid-plane" label="Grid plane" w={65} value="In Plane" /></Offset>
        </Column>
      </Group>
      <Group $w={63}>
        <IconGrid $cols={2}>
          <IconTool $on aria-label="Snap to grid"><Icon n="snapGrid" /></IconTool>
          <IconTool $on aria-label="Snap to center"><Icon n="snapCenter" /></IconTool>
          <IconTool $on aria-label="Snap to vertex"><Icon n="snapVertex" /></IconTool>
          <IconTool $on aria-label="Snap to edge"><Icon n="snapEdge" /></IconTool>
          <IconTool $on aria-label="Snap to mid point"><Icon n="snapMid" /></IconTool>
          <IconTool aria-label="Snap to arc center"><Icon n="snapArc" /></IconTool>
        </IconGrid>
      </Group>
      <Group>
        <Column $w={86}>
          <Offset><Combo id="solid-kind" label="Model type" w={80} value="Model" /></Offset>
          <Offset><Combo id="material-name" label="Material name" w={80} value="vacuum" /></Offset>
          <Tool><Icon n="material" />Material</Tool>
        </Column>
      </Group>
    </RibbonBar>
    <TabStrip>
      {tabs.map(t => <RibbonTab key={t} $on={t === 'Draw'}>{t}</RibbonTab>)}
      <Spacer />
      <TabIcons><Icon n="help" /><Icon n="ansys" /></TabIcons>
    </TabStrip>
  </>
);

/* ---------------------------------------------------------------- panels */

const Workspace = styled.main`
  display: grid;
  grid-template-columns: 358px 7px 305px 4px minmax(0, 1fr) 6px 150px;
  flex: 1;
  min-height: 0;
`;

const Splitter = styled.div<{ $h?: boolean }>`
  height: ${p => (p.$h ? '6px' : 'auto')};
  background:
    conic-gradient(at 1px 2px, transparent 75%, #34466f 0) 0 0 / 4px 4px,
    conic-gradient(at 1px 2px, transparent 75%, #34466f 0) 2px 2px / 4px 4px,
    #848686;
`;

const Panel = styled.section<{ $h?: string }>`
  display: flex;
  flex-direction: column;
  min-width: 0;
  min-height: 0;
  height: ${p => p.$h || 'auto'};
`;

const PanelHead = styled.div`
  display: flex;
  align-items: center;
  gap: 3px;
  height: 26px;
  padding: 0 3px 2px 4px;
  border-bottom: 1px solid #a6a6a6;
  background: linear-gradient(#dadde2, #bfc3c8);
  white-space: nowrap;

  h2 {
    flex: 1;
    overflow: hidden;
    margin: 0;
    font-size: 11px;
    font-weight: 400;
    text-overflow: ellipsis;
  }
`;

const HeadButton = styled.button`
  display: grid;
  place-items: center;
  width: 16px;
  height: 16px;
`;

const Head = ({ title }: { title: string }) => (
  <PanelHead>
    <h2>{title}</h2>
    <HeadButton aria-label="Pin"><Icon n="pin" w={14} /></HeadButton>
    <HeadButton aria-label="Close"><Icon n="x" w={14} /></HeadButton>
  </PanelHead>
);

const LeftDock = styled.div`
  display: grid;
  grid-template-rows: 354px 6px minmax(0, 1fr);
`;

const WhiteBody = styled.div`
  flex: 1;
  min-height: 0;
  background: #fff;
`;

/* Tree rows: dotted guide lanes, an optional expander, an icon and a label. */

const TreeRow = styled.li<{ $h: number; $size?: number }>`
  display: flex;
  align-items: stretch;
  height: ${p => p.$h}px;
  font-size: ${p => p.$size || 12}px;
  line-height: ${p => p.$h}px;
  white-space: nowrap;

  > svg { align-self: center; }
`;

const dotsV = 'linear-gradient(#8a8a8a 50%, transparent 50%) 8px 0 / 1px 2px repeat-y';
const dotsH = 'linear-gradient(90deg, #8a8a8a 50%, transparent 50%) 8px 50% / 2px 1px repeat-x';
const maskLeft = 'linear-gradient(#fff, #fff) 0 0 / 8px 100% no-repeat';
const maskBelow = 'linear-gradient(#fff, #fff) 0 100% / 100% 45% no-repeat';
const maskAbove = 'linear-gradient(#fff, #fff) 0 0 / 100% 45% no-repeat';

const Lane = styled.span<{ $w: number; $branch?: boolean; $v?: boolean; $last?: boolean; $first?: boolean }>`
  display: flex;
  align-items: center;
  flex: none;
  width: ${p => p.$w}px;
  padding-left: 4px;
  background: ${p =>
    [
      p.$branch && maskLeft,
      p.$last && maskBelow,
      p.$first && maskAbove,
      p.$branch && dotsH,
      p.$v !== false && dotsV,
    ]
      .filter(Boolean)
      .join(', ')};
`;

const Expander = styled.button<{ $open?: boolean }>`
  width: 9px;
  height: 9px;
  border: 1px solid #777;
  background:
    linear-gradient(#000, #000) 50% 50% / 5px 1px no-repeat,
    ${p => (p.$open ? '' : 'linear-gradient(#000, #000) 50% 50% / 1px 5px no-repeat,')}
    #fff;
`;

const TreeLabel = styled.span<{ $hot?: boolean; $bold?: boolean }>`
  margin-left: 4px;
  padding: 0 2px;
  background: ${p => (p.$hot ? '#f0f0f0' : 'transparent')};
  font-weight: ${p => (p.$bold ? 700 : 400)};
`;

const ProjectTree = () => (
  <ul>
    <TreeRow $h={18} $size={11}>
      <Lane $w={19} $branch $v={false}><Expander $open aria-label="Collapse Test" /></Lane>
      <Icon n="project" />
      <TreeLabel $bold>Test*</TreeLabel>
    </TreeRow>
    <TreeRow $h={18} $size={11}>
      <Lane $w={19} $v={false} />
      <Lane $w={20} $branch><Expander aria-label="Expand design" /></Lane>
      <Icon n="design" w={14} />
      <TreeLabel $bold $hot>Magnetic circuit (Magnetostatic, XY)*</TreeLabel>
    </TreeRow>
    <TreeRow $h={18} $size={11}>
      <Lane $w={19} $v={false} />
      <Lane $w={20} $branch $last><Expander aria-label="Expand definitions" /></Lane>
      <Icon n="folder" w={14} />
      <TreeLabel>Definitions</TreeLabel>
    </TreeRow>
  </ul>
);

/* Properties */

const TabPage = styled.div`
  display: flex;
  flex-direction: column;
  flex: 1;
  min-height: 0;
  margin: 5px 4px 0 5px;
  padding: 2px;
  border: 1px solid #fff;
  border-right: 2px solid #707070;
  border-bottom: 2px solid #707070;
`;

const TabFoot = styled.div`
  display: flex;
  align-items: flex-start;
  height: 24px;
  padding-left: 6px;
`;

const FootTab = styled.button`
  height: 19px;
  margin-top: -2px;
  padding: 2px 6px 0;
  border: solid #707070;
  border-width: 0 2px 2px 0;
  background: #f0f0f0;
  font-size: 12px;
  line-height: 15px;
`;

const Sunken = styled.div`
  flex: 1;
  min-height: 0;
  border: 2px solid #e3e3e3;
  border-top-color: #707070;
  border-left-color: #707070;
  background: #fff;
`;

const PropTable = styled.table`
  width: 100%;
  table-layout: fixed;
  border-collapse: separate;
  border-spacing: 0;
  font-size: 12px;

  th, td {
    height: 24px;
    overflow: hidden;
    padding: 0 2px;
    font-weight: 400;
    text-align: left;
    text-overflow: ellipsis;
    white-space: nowrap;
  }
  thead th {
    padding: 0 1px;
    border: 1px solid #fff;
    border-right: 2px solid #808080;
    border-bottom: 1px solid #808080;
    background: #f0f0f0;
    text-align: center;
  }
  tbody th, tbody td {
    border-right: 1px solid #c0c0c0;
    border-bottom: 1px solid #c0c0c0;
  }
  tbody td:last-child { border: 0; }
`;

const Check = styled.input<{ $s?: number }>`
  display: grid;
  place-items: center;
  appearance: none;
  width: ${p => p.$s || 18}px;
  height: ${p => p.$s || 18}px;
  margin: 0 auto;
  border: 2px solid #e8e8e8;
  border-top-color: #707070;
  border-left-color: #707070;
  background: #fff;

  &:checked::after {
    content: '';
    width: 9px;
    height: 5px;
    margin-top: -3px;
    border: solid #000;
    border-width: 0 0 3px 3px;
    transform: rotate(-45deg);
  }
`;

const ColorButton = styled.button`
  display: block;
  width: 118px;
  height: 16px;
  margin: 0 auto;
  border: 1px solid #000;
  background: #fff;
`;

const raised = css`
  border: 1px solid #fff;
  border-right: 2px solid #707070;
  border-bottom: 2px solid #707070;
  background: #f0f0f0;
`;

const ValueButton = styled.button`
  ${raised}
  display: block;
  width: 100%;
  height: 20px;
  line-height: 16px;
`;

const props: [string, ReactNode, string?][] = [
  ['Name', ''],
  ['Material', '"vacuum"', '"vacuum"'],
  ['Solve Inside', <Check type="checkbox" aria-label="Solve Inside" defaultChecked />],
  ['Orientation', 'Global'],
  ['Model', <Check type="checkbox" aria-label="Model" defaultChecked />],
  ['Group', 'Model'],
  ['Display Wireframe', <Check type="checkbox" aria-label="Display Wireframe" />],
  ['MaterialAppearance', <Check type="checkbox" aria-label="Material Appearance" />],
  ['Color', <ColorButton aria-label="Color" />],
  ['Transparent', <ValueButton>0</ValueButton>],
];

const Properties = () => (
  <Panel>
    <Head title="Properties" />
    <TabPage>
      <Sunken>
        <PropTable>
          <colgroup>
            <col width="64" /><col width="130" /><col width="44" /><col width="88" /><col />
          </colgroup>
          <thead>
            <tr><th>Name</th><th>Value</th><th>Unit</th><th>Evaluated Value</th><th /></tr>
          </thead>
          <tbody>
            {props.map(([name, value, evaluated]) => (
              <tr key={name}><th scope="row">{name}</th><td>{value}</td><td /><td>{evaluated}</td><td /></tr>
            ))}
          </tbody>
        </PropTable>
      </Sunken>
    </TabPage>
    <TabFoot><FootTab>Attribute</FootTab></TabFoot>
  </Panel>
);

/* Model history tree */

const HistoryPanel = styled.section`
  display: flex;
  min-height: 0;
  border-top: 2px solid #707070;
  border-left: 1px solid #707070;
  border-right: 2px solid #e6e6e6;
  border-bottom: 2px solid #e6e6e6;
  background: #fff;

  > ul { flex: 1; overflow: hidden; }
`;

const ScrollBar = styled.div<{ $w?: number }>`
  display: flex;
  flex-direction: column;
  align-items: center;
  justify-content: space-between;
  width: ${p => p.$w || 15}px;
  background: #f0f0f0;
`;

const ScrollButton = styled.button`
  display: grid;
  place-items: center;
  width: 15px;
  height: 17px;
`;

const Track = styled.div<{ $top: number }>`
  flex: 1;
  width: 100%;
  padding-top: ${p => p.$top}px;
`;

const Thumb = styled.div<{ $h: number }>`
  height: ${p => p.$h}px;
  background: #cdcdcd;
`;

type Step = 'body' | 'dup' | 'create' | 'cover';
const history: [string, Step[]][] = [
  ['Rectangle2_1', ['body', 'dup', 'dup']],
  ['Rectangle2_1_1', ['body', 'dup']],
  ['Rectangle2_1_1_1', []],
  ['Rectangle2_1_2', ['body', 'dup']],
  ['Rectangle2_1_2_1', []],
  ['Rectangle2_2', ['body', 'dup']],
  ['Rectangle2_2_1', []],
  ['Rectangle2_3', ['body', 'dup']],
  ['Rectangle2_3_1', []],
  ['Rectangle3', ['create', 'cover', 'dup', 'dup', 'dup']],
  ['Rectangle3_1', ['body', 'dup', 'dup']],
  ['Rectangle3_1_1', ['body', 'dup']],
  ['Rectangle3_1_1_1', []],
  ['Rectangle3_1_2', ['body']],
];
const stepInfo: Record<Step, [string, string]> = {
  body: ['dup', 'DuplicateBodyMirror'],
  dup: ['dup', 'DuplicateMirror'],
  create: ['create', 'CreateRectangle'],
  cover: ['cover', 'CoverLines'],
};

const History = () => (
  <HistoryPanel>
    <ul>
      {history.map(([name, steps]) => (
        <React.Fragment key={name}>
          <TreeRow $h={20}>
            <Lane $w={57} />
            <Lane $w={20} $branch>
              <Expander $open={steps.length > 0} aria-label={`Toggle ${name}`} />
            </Lane>
            <Icon n="sheetObj" w={14} />
            <TreeLabel $hot>{name}</TreeLabel>
          </TreeRow>
          {steps.map((s, k) => (
            <TreeRow $h={20} key={k}>
              <Lane $w={57} />
              <Lane $w={19} />
              <Lane $w={20} $branch $last={k === steps.length - 1}>
                {s === 'body' && <Expander aria-label="Expand step" />}
              </Lane>
              <Icon n={stepInfo[s][0]} w={14} />
              <TreeLabel>{stepInfo[s][1]}</TreeLabel>
            </TreeRow>
          ))}
        </React.Fragment>
      ))}
    </ul>
    <ScrollBar>
      <ScrollButton aria-label="Scroll up"><Chevron d="up" /></ScrollButton>
      <Track $top={109}><Thumb $h={317} /></Track>
      <ScrollButton aria-label="Scroll down"><Chevron d="down" /></ScrollButton>
    </ScrollBar>
  </HistoryPanel>
);

/* Modeler view */

const View = styled.section`
  display: flex;
  min-height: 0;
  overflow: hidden;
  border: 2px solid #707070;
  border-right: 1px solid #f0f0f0;
  border-bottom-color: #f0f0f0;
  background: #fff;

  svg { width: 100%; height: 100%; }
  text { font-family: ${CLASSIC}; }
`;

const STEP = 17.28;
const gx = (k: number) => Math.floor(160.4 + STEP * k) + 0.5;
const gy = (k: number) => Math.floor(579.2 - STEP * k) + 0.5;
const range = (a: number, b: number) => Array.from({ length: b - a + 1 }, (_, i) => a + i);
const holes = [2.5, 7.5, 12.5, 17.5, 22.5];

const gridLines = (major: boolean) => {
  const keep = (k: number) => (k % 5 === 0) === major;
  const color = major ? '#c1bfdd' : '#dbd9ea';
  return (
    <g stroke={color}>
      {range(-9, 53).filter(keep).map(k => <path key={`v${k}`} d={`M${gx(k)} ${gy(33)}V${gy(-7)}`} />)}
      {range(-7, 33).filter(keep).map(k => <path key={`h${k}`} d={`M${gx(-9)} ${gy(k)}H${gx(53)}`} />)}
    </g>
  );
};

const Modeler = () => (
  <View>
    <svg aria-label="Modeler view">
      {gridLines(false)}
      {gridLines(true)}
      <path d={`M${gx(0)} ${gy(33)}V${gy(-7)}`} stroke="#e39a9a" />
      <path d={`M${gx(-9)} ${gy(0)}H${gx(0)}`} stroke="#8fb894" />
      <rect x={gx(0)} y={gy(27.5)} width={gx(27.5) - gx(0)} height={gy(0) - gy(27.5)} fill="#ff00ff" fillOpacity=".9" stroke="#7a107a" />
      {holes.map(a => holes.map(b => (
        <rect key={`${a}-${b}`} x={gx(a)} y={gy(b + 2.5)} width={gx(a + 2.5) - gx(a)} height={gy(b) - gy(b + 2.5)} fill="#ff00ff" stroke="#800080" />
      )))}
      <path d="M161 579V50" stroke="#009600" strokeWidth="2" />
      <path d="M160.500 32l6.500 19h-13z" fill="#00a400" />
      <path d="M160.500 551l3 6h-6z" fill="#008c00" />
      <path d="M160 579H1058" stroke="#ff0000" strokeWidth="2" />
      <path d="M1056 573l20 6-20 6z" fill="#ff1010" />
      <path d="M182 576l6 3-6 3z" fill="#ff0000" />
      <text x="161" y="31" fontSize="17" fill="#129a22">Y</text>
      <text x="1068" y="579" fontSize="17" fill="#ff1010">X</text>
      <text x="161" y="577" fontSize="15" fill="#3f5fe0">Z</text>
      <circle cx="160.500" cy="579" r="6.500" fill="#3560d8" />
      <path d="M160.500 573v12" stroke="#5f86ee" />
      <rect x="324.500" y="665.500" width="437" height="11" fill="#fff" stroke="#000" />
      <rect x="543" y="665" width="219" height="12" fill="#000" />
      <g fontSize="12" fill="#000">
        <text x="324" y="698" textAnchor="middle">0</text>
        <text x="543" y="698" textAnchor="middle">25</text>
        <text x="755" y="698">50 (mm)</text>
      </g>
    </svg>
  </View>
);

/* Component libraries */

const LibBody = styled.div`
  display: flex;
  flex-direction: column;
  flex: 1;
  min-height: 0;
  overflow: hidden;
  margin-right: 2px;
  background: #fff;

  ul { flex: 1; overflow: hidden; }
`;

const HScroll = styled.div`
  display: flex;
  align-items: center;
  height: 16px;
  background: #f0f0f0;

  > button { width: 17px; height: 15px; }
`;

const HThumb = styled.div`
  width: 82px;
  height: 15px;
  background: #cdcdcd;
`;

const Libraries = () => (
  <Panel>
    <Head title="Component Libraries" />
    <TabPage>
      <LibBody>
        <ul>
          <TreeRow $h={20}>
            <Lane $w={19} $branch $first />
            <Icon n="lib" />
            <TreeLabel $hot>Favorites</TreeLabel>
          </TreeRow>
          <TreeRow $h={20}>
            <Lane $w={19} $branch $last />
            <Icon n="lib" />
            <TreeLabel>Most Recently Used</TreeLabel>
          </TreeRow>
        </ul>
        <HScroll>
          <ScrollButton aria-label="Scroll left"><Chevron d="left" /></ScrollButton>
          <HThumb />
          <Spacer />
          <ScrollButton aria-label="Scroll right"><Chevron d="right" /></ScrollButton>
        </HScroll>
      </LibBody>
    </TabPage>
    <TabFoot><FootTab>Components</FootTab></TabFoot>
  </Panel>
);

/* ---------------------------------------------------------------- dialog */

const Dialog = styled.div`
  position: fixed;
  top: 391px;
  left: 50%;
  width: 296px;
  margin-left: -148px;
  border: 1px solid #5c3a5c;
  background: #f0f0f0;
  font: 11px/14px ${CLASSIC};
`;

const DialogTitle = styled.div`
  display: flex;
  align-items: center;
  gap: 5px;
  height: 30px;
  padding: 0 7px 0 8px;
  background: #fff;
  font: 12px/18px ${UI};
`;

const DialogForm = styled.form`
  padding: 11px 23px;
`;

const Parts = styled.div`
  display: grid;
  grid-template-columns: 100px 47px 100px;
  row-gap: 4px;
`;

const PartLabel = styled.label<{ $mid?: boolean }>`
  padding-left: ${p => (p.$mid ? 0 : 2)}px;
  text-align: ${p => (p.$mid ? 'center' : 'left')};
`;

const sunkenBox = css`
  border: 2px solid #fff;
  border-top-color: #808080;
  border-left-color: #808080;
  background: #fff;
`;

const ListBox = styled.div`
  ${sunkenBox}
  display: flex;
  height: 85px;

  ul { flex: 1; overflow: hidden; padding-top: 1px; }
  li { padding-left: 2px; line-height: 13px; white-space: nowrap; }
`;

const Arrows = styled.div`
  display: flex;
  flex-direction: column;
  align-items: center;
  gap: 23px;
  padding-top: 8px;
`;

const Push = styled.button<{ $w: number; $main?: boolean }>`
  ${raised}
  width: ${p => p.$w}px;
  height: 23px;
  ${p => p.$main && css`border: 2px solid #606060; box-shadow: inset -1px -1px #a0a0a0;`}
  &:disabled { color: #a0a0a0; }
`;

const TextField = styled.input`
  ${sunkenBox}
  width: 100px;
  height: 23px;
  margin-top: 7px;
`;

const CheckRow = styled.div`
  display: flex;
  align-items: center;
  gap: 5px;
  height: 13px;
  margin-top: 12px;

  input { margin: 0; }
`;

const Buttons = styled.div`
  display: flex;
  gap: 37px;
  margin-top: 12px;
  padding-left: 30px;
`;

const toolParts = ['Rectangle2', 'Rectangle2_1', 'Rectangle2_1_1', 'Rectangle2_1_1_1', 'Rectangle2_1_2', 'Rectangle2_1_2_1', 'Rectangle2_2'];

const SubtractDialog = () => (
  <Dialog role="dialog" aria-label="Subtract">
    <DialogTitle>
      <Icon n="edt" />
      Subtract
      <Spacer />
      <button aria-label="Close">
        <svg width="16" height="16" viewBox="0 0 16 16"><path d="M3 3l10 10M13 3L3 13" stroke="#111" strokeWidth="1.200" /></svg>
      </button>
    </DialogTitle>
    <DialogForm onSubmit={e => e.preventDefault()}>
      <Parts>
        <PartLabel htmlFor="blank-filter">Blank Parts</PartLabel>
        <PartLabel as="span" $mid>-</PartLabel>
        <PartLabel htmlFor="tool-filter">Tool Parts</PartLabel>
        <ListBox><ul><li>Rectangle1</li></ul></ListBox>
        <Arrows>
          <Push type="button" $w={27} disabled>--&gt;</Push>
          <Push type="button" $w={27} disabled>&lt;--</Push>
        </Arrows>
        <ListBox>
          <ul>{toolParts.map(t => <li key={t}>{t}</li>)}</ul>
          <ScrollBar $w={16}>
            <ScrollButton type="button" aria-label="Scroll up"><Chevron d="up" /></ScrollButton>
            <Track $top={0}><Thumb $h={17} /></Track>
            <ScrollButton type="button" aria-label="Scroll down"><Chevron d="down" /></ScrollButton>
          </ScrollBar>
        </ListBox>
        <TextField id="blank-filter" />
        <span />
        <TextField id="tool-filter" />
      </Parts>
      <CheckRow>
        <Check id="clone" type="checkbox" $s={13} />
        <label htmlFor="clone">Clone tool objects before operation</label>
      </CheckRow>
      <Buttons>
        <Push $w={75} $main>OK</Push>
        <Push $w={75} type="button">Cancel</Push>
      </Buttons>
    </DialogForm>
  </Dialog>
);

/* ------------------------------------------------- progress, status, taskbar */

const ProgressBody = styled(WhiteBody)`
  display: flex;
  justify-content: flex-end;
`;

const Activation = styled.div`
  width: 289px;
  padding-top: 52px;
  color: #bdbdbd;
  font: 15px/18px ${UI};

  strong { display: block; font-size: 20px; font-weight: 400; line-height: 30px; }
`;

const StatusBar = styled.footer`
  display: flex;
  align-items: center;
  gap: 4px;
  height: 26px;
  padding: 2px 1px 0 4px;
  background: #ccd2da;
`;

const StatusButton = styled.button<{ $on?: boolean; $w: number }>`
  display: flex;
  align-items: center;
  gap: 5px;
  width: ${p => p.$w}px;
  height: 22px;
  padding-left: 5px;
  border: 1px solid ${p => (p.$on ? '#0b5aa2' : '#adadad')};
  background: ${p => (p.$on ? '#cce4f7' : '#e1e1e1')};
  font: 10px/20px ${MONO};
`;

const Taskbar = styled.footer`
  display: flex;
  align-items: stretch;
  height: 40px;
  background: linear-gradient(90deg, #20363f, #1e3341 50%, #1a2742 85%);
  color: #fff;
`;

const StartButton = styled.button`
  display: grid;
  place-items: center;
  width: 48px;
`;

const SearchBox = styled.label`
  display: flex;
  align-items: center;
  gap: 10px;
  width: 344px;
  padding-left: 12px;
  border: 1px solid #b8bcbe;
  background: #f2f2f2;

  input {
    flex: 1;
    min-width: 0;
    padding: 0;
    border: 0;
    background: none;
    color: #333;
    font: 14px/20px ${UI};
  }
  input::placeholder { color: #333; opacity: 1; }
`;

const Apps = styled.div`
  display: flex;
  gap: 1px;
  padding-left: 2px;
`;

const AppButton = styled.button<{ $run?: boolean; $on?: boolean }>`
  display: grid;
  place-items: center;
  width: 48px;
  background: ${p =>
    [
      p.$run && `linear-gradient(#76b9ed, #76b9ed) 50% 100% / ${p.$on ? 48 : 40}px 2px no-repeat`,
      p.$on ? 'linear-gradient(#4d6069, #4d6069)' : 'none',
    ]
      .filter(Boolean)
      .join(', ')};
`;

const Tray = styled.div`
  display: flex;
  align-items: center;
  gap: 8px;
  padding-right: 4px;

  > svg:first-child { margin: 0 18px 4px 0; }
`;

const Clock = styled.time`
  width: 68px;
  margin-right: 7px;
  font-size: 12px;
  line-height: 20px;
  text-align: center;
`;

const ShowDesktop = styled.div`
  width: 1px;
  height: 40px;
  margin-left: 12px;
  background: #6d788a;
`;

const PageMark = styled.div`
  position: fixed;
  right: 11px;
  bottom: 9px;
  color: rgba(255, 255, 255, 0.6);
  font: 16px/20px ${CLASSIC};
  pointer-events: none;
`;

export default function App() {
  return (
    <Page>
      <Global />
      <TitleBar>
        <Icon n="edt" />
        ANSYS Electronics Desktop 2019 R3 - Test - Magnetic circuit - 3D Modeler - [Test - Magnetic circuit - Modeler]
        <Spacer />
        <CaptionButton aria-label="Minimize"><Icon n="winMin" /></CaptionButton>
        <CaptionButton aria-label="Restore"><Icon n="winMax" /></CaptionButton>
        <CaptionButton aria-label="Close"><Icon n="winX" /></CaptionButton>
      </TitleBar>
      <MenuBar>
        <Icon n="doc" w={14} />
        {['File', 'Edit', 'View', 'Project', 'Draw', 'Modeler', 'Maxwell 2D', 'Tools', 'Window', 'Help'].map(m => (
          <MenuItem key={m}>{m}</MenuItem>
        ))}
        <Spacer />
        <MdiButtons>
          <MdiButton aria-label="Minimize window"><Icon n="mdiMin" /></MdiButton>
          <MdiButton aria-label="Restore window"><Icon n="mdiMax" /></MdiButton>
          <MdiButton aria-label="Close window"><Icon n="mdiX" /></MdiButton>
        </MdiButtons>
      </MenuBar>
      <Ribbon />
      <Workspace>
        <LeftDock>
          <Panel>
            <Head title="Project Manager" />
            <WhiteBody><ProjectTree /></WhiteBody>
          </Panel>
          <Splitter $h />
          <Properties />
        </LeftDock>
        <Splitter />
        <History />
        <div />
        <Modeler />
        <Splitter />
        <Libraries />
      </Workspace>
      <Splitter $h />
      <Panel $h="150px">
        <Head title="Progress" />
        <ProgressBody>
          <Activation>
            <strong>激活 Windows</strong>
            转到“设置”以激活 Windows。
          </Activation>
        </ProgressBody>
      </Panel>
      <StatusBar>
        26 objects are selected
        <Spacer />
        <StatusButton $w={123}><Icon n="msg" w={12} />Show 0 Messages</StatusButton>
        <StatusButton $w={111} $on><Icon n="bar" w={11} />Hide Progress</StatusButton>
      </StatusBar>
      <Taskbar>
        <StartButton aria-label="Start"><Icon n="start" /></StartButton>
        <SearchBox>
          <Icon n="search" w={17} />
          <input placeholder="在这里输入你要搜索的内容" aria-label="搜索" />
        </SearchBox>
        <Apps>
          <AppButton aria-label="Cortana"><Icon n="cortana" w={22} /></AppButton>
          <AppButton aria-label="Store"><Icon n="store" w={24} /></AppButton>
          <AppButton $run aria-label="Explorer"><Icon n="explorer" w={24} /></AppButton>
          <AppButton $run aria-label="Firefox"><Icon n="firefox" w={24} /></AppButton>
          <AppButton $run $on aria-label="Electronics Desktop"><Icon n="edt" w={24} /></AppButton>
          <AppButton $run aria-label="Word"><Icon n="word" w={24} /></AppButton>
          <AppButton $run aria-label="Photos"><Icon n="photos" w={24} /></AppButton>
          <AppButton $run aria-label="Album"><Icon n="avatar" w={24} /></AppButton>
        </Apps>
        <Spacer />
        <Tray>
          <Icon n="ime" />
          <Icon n="up" w={14} />
          <Icon n="qq" />
          <Icon n="battery" />
          <Icon n="net" />
          <Icon n="sound" />
          <Clock>20:20<br />2021/2/18</Clock>
          <Icon n="note" />
          <ShowDesktop />
        </Tray>
      </Taskbar>
      <SubtractDialog />
      <PageMark>https://blog.csdn.net/qq_41387280</PageMark>
    </Page>
  );
}
